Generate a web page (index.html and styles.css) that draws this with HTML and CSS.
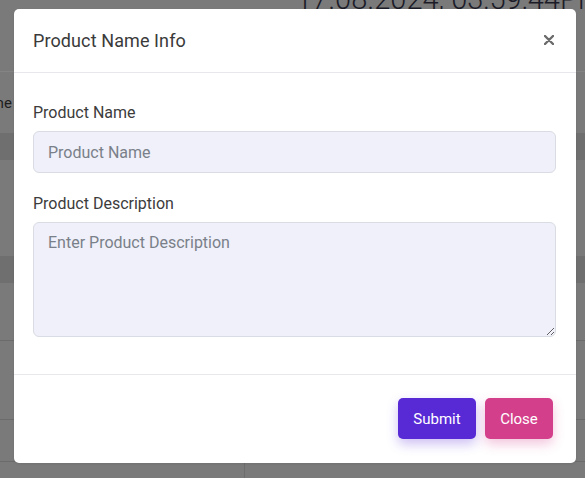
FILE: index.html
```html
<!DOCTYPE html>
<html>
<head>
<meta charset="utf-8">
<link rel="stylesheet" href="styles.css">
</head>
<body>
<div class="page">
  <div class="row row-top"><div class="stamp">17.08.2024, 03:59:44PM</div></div>
  <div class="row row-a"><span class="cut">Name</span></div>
  <div class="row band"></div>
  <div class="row row-b"></div>
  <div class="row band"></div>
  <div class="row row-c"></div>
  <div class="row row-d"></div>
  <div class="row row-e"></div>
  <div class="row row-f"><div class="col"></div></div>
</div>

<div class="modal">
  <div class="modal-header">
    <h5 class="modal-title">Product Name Info</h5>
    <button class="close" aria-label="Close">
      <svg width="10" height="10" viewBox="0 0 10 10"><path d="M1 1L9 9M9 1L1 9" stroke="#6b6b6b" stroke-width="2.4" stroke-linecap="round"/></svg>
    </button>
  </div>
  <div class="modal-body">
    <label class="label">Product Name</label>
    <input class="field" type="text" placeholder="Product Name">
    <label class="label label-2">Product Description</label>
    <textarea class="field area" placeholder="Enter Product Description"></textarea>
  </div>
  <div class="modal-footer">
    <button class="btn btn-submit">Submit</button>
    <button class="btn btn-close">Close</button>
  </div>
</div>
</body>
</html>
```
FILE: styles.css
```css
html, body {
  margin: 0;
  padding: 0;
  width: 585px;
  height: 478px;
  overflow: hidden;
  background: #7a7a7a;
  font-family: Roboto, "Liberation Sans", sans-serif;
}

.page {
  display: flex;
  flex-direction: column;
  width: 585px;
  height: 478px;
  background: #7a7a7a;
}

.row {
  flex: none;
  box-sizing: border-box;
}

.row-top {
  height: 72px;
  border-bottom: 1px solid #848484;
  overflow: hidden;
}

.stamp {
  margin: -18px 0 0 296px;
  font-family: Roboto, "Liberation Sans", sans-serif;
  font-weight: 300;
  font-size: 29px;
  line-height: 34px;
  color: #1c1c28;
  white-space: nowrap;
}

.row-a {
  height: 61px;
  padding-top: 21px;
  overflow: hidden;
}

.cut {
  display: block;
  margin-left: -28px;
  font-size: 15px;
  line-height: 20px;
  color: #1e1e1e;
}

.band {
  height: 27px;
  background: #6f6f6f;
}

.row-b { height: 96px; }

.row-c {
  height: 58px;
  border-bottom: 1px solid #6b6b6b;
}

.row-d {
  height: 79px;
  border-bottom: 1px solid #6b6b6b;
}

.row-e {
  height: 42px;
  border-bottom: 1px solid #6b6b6b;
}

.row-f {
  flex: 1;
}

.col {
  margin-left: 244px;
  width: 1px;
  height: 100%;
  background: #6d6d6d;
}

.modal {
  position: absolute;
  left: 14px;
  top: 9px;
  width: 562px;
  height: 454px;
  background: #fff;
  border-radius: 5px;
  display: flex;
  flex-direction: column;
  box-shadow: 0 1px 3px rgba(0,0,0,0.08);
}

.modal-header {
  height: 64px;
  box-sizing: border-box;
  border-bottom: 1px solid #e6e8ec;
  display: flex;
  align-items: center;
  justify-content: space-between;
  padding: 0 20px 1px 19px;
  flex: none;
}

.modal-title {
  margin: 0;
  font-size: 18px;
  font-weight: 400;
  color: #3a3a3a;
  letter-spacing: 0.1px;
}

.close {
  border: 0;
  background: none;
  padding: 0;
  width: 14px;
  height: 14px;
  display: flex;
  align-items: center;
  justify-content: center;
  cursor: pointer;
}

.modal-body {
  flex: none;
  height: 302px;
  box-sizing: border-box;
  padding: 29px 20px 0 19px;
  display: flex;
  flex-direction: column;
  border-bottom: 1px solid #e6e8ec;
}

.label {
  display: block;
  font-size: 16px;
  line-height: 22px;
  color: #3c3c3c;
  margin-bottom: 7px;
}

.label-2 {
  margin-top: 20px;
}

.field {
  box-sizing: border-box;
  width: 100%;
  height: 42px;
  margin: 0;
  background: #eff0f9;
  border: 1px solid #d9dce3;
  border-radius: 6px;
  padding: 0 14px;
  font-family: Roboto, "Liberation Sans", sans-serif;
  font-size: 16px;
  color: #333;
  outline: none;
}

.field::placeholder {
  color: #7a8089;
}

.area {
  height: 115px;
  padding-top: 10px;
  resize: vertical;
  display: block;
}

.modal-footer {
  flex: 1;
  display: flex;
  justify-content: flex-end;
  align-items: flex-start;
  gap: 9px;
  padding: 23px 23px 0 0;
}

.btn {
  height: 41px;
  border: 0;
  border-radius: 5px;
  color: #fff;
  font-family: Roboto, "Liberation Sans", sans-serif;
  font-size: 15px;
  padding: 1px 0 0;
  cursor: pointer;
}

.btn-submit {
  width: 78px;
  background: #582ad6;
  box-shadow: 0 5px 12px rgba(88, 42, 214, 0.3);
}

.btn-close {
  width: 68px;
  background: #d43f8b;
  box-shadow: 0 5px 12px rgba(212, 63, 139, 0.3);
}
```
